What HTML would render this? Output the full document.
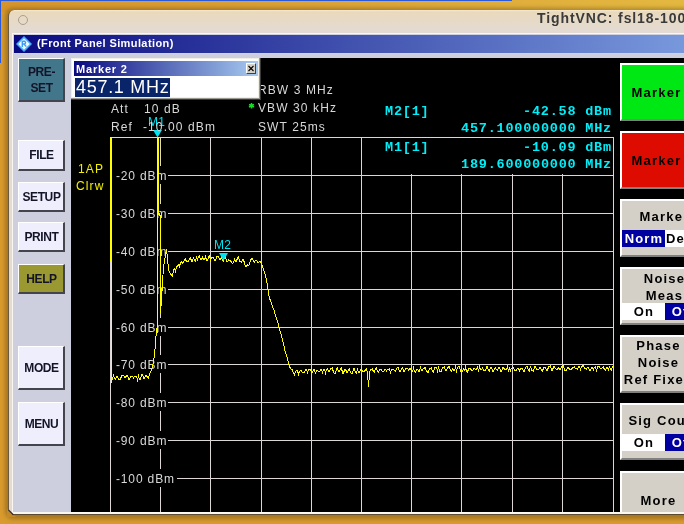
<!DOCTYPE html>
<html><head><meta charset="utf-8">
<style>
*{margin:0;padding:0;box-sizing:border-box}
html,body{width:684px;height:524px;overflow:hidden}
body{position:relative;background:#d99b2e;font-family:"Liberation Sans",sans-serif}
.a{position:absolute}
div,span{will-change:transform}
.btn{position:absolute;left:18px;width:47px;background:#eeeefc;border-top:1px solid #fff;border-left:1px solid #fff;border-right:2px solid #44444c;border-bottom:2px solid #44444c;}
.bt{position:absolute;left:-1px;right:-2px;text-align:center;font-weight:bold;font-size:12px;line-height:14px;color:#141428;letter-spacing:-0.4px;white-space:nowrap}
.sk{position:absolute;left:620px;width:80px;background:#d4d0c8;border-top:2px solid #fff;border-left:2px solid #fff;border-bottom:2px solid #808080;}
.st{position:absolute;left:-2px;width:77px;text-align:center;font-weight:bold;font-size:13px;line-height:14px;color:#000;letter-spacing:1.2px;white-space:nowrap}
.tg{position:absolute;left:0;width:78px;height:17px;display:flex}
.tw{position:relative;width:43px;height:17px;background:#fff}
.tw2{position:relative;flex:1;height:17px;background:#fff}
.tw span,.tw2 span{position:absolute;left:1px;right:0;text-align:center;font-weight:bold;font-size:13px;line-height:14px;letter-spacing:1.2px}
.scr{font-size:12px;line-height:14px;color:#d8d8d8;letter-spacing:1.1px;position:absolute;white-space:nowrap}
.cy{font-family:"Liberation Mono",monospace;font-weight:bold;font-size:13.5px;line-height:16px;letter-spacing:0.78px;color:#00eef8;position:absolute;white-space:nowrap}
</style></head><body>
<div class="a" style="left:0;top:0;width:684px;height:12px;background:linear-gradient(90deg,#d6952c 0%,#dba236 45%,#e4b840 100%)"></div>
<div class="a" style="left:0;top:0;width:512px;height:1px;background:#2a5ad8"></div>
<div class="a" style="left:0;top:0;width:1px;height:63px;background:#2a5ad8"></div>
<div class="a" style="left:5px;top:8px;width:700px;height:511px;background:rgba(70,45,0,0.35);border-radius:8px;filter:blur(2px)"></div>
<div class="a" style="left:8px;top:10px;width:700px;height:505px;background:linear-gradient(180deg,#f4e8cf 0px,#e9d9bd 2px,#e3dbd3 22px,#e3dbd3 100%);border-radius:6px 6px 0 0;border-left:1px solid #6a5a40;border-bottom:1px solid #5a4a30"></div>
<div class="a" style="left:18px;top:15px;width:10px;height:10px;border-radius:50%;border:1px solid #a89e90;background:transparent"></div>
<div class="a" style="left:537px;top:10px;font-weight:bold;font-size:14px;line-height:16px;color:#3a3a3a;white-space:nowrap;letter-spacing:0.9px">TightVNC: fsl18-100000</div>
<div class="a" style="left:12px;top:33px;width:700px;height:481px;background:#fbf6ee"></div>
<div class="a" style="left:13px;top:34px;width:700px;height:478px;background:#cdcfdf"></div>
<div class="a" style="left:14px;top:35px;width:670px;height:18px;background:linear-gradient(90deg,#0a0a80 0%,#7898dc 100%)"></div>
<div class="a" style="left:13px;top:53px;width:700px;height:1px;background:#d8d4cc"></div>
<svg class="a" style="left:0;top:500px" width="30" height="24"><polygon points="7,9 7,17 16,17" fill="#c48a2a"/><path d="M8.5 10 L13.5 15" stroke="#3a3020" stroke-width="1.2"/></svg>
<svg class="a" style="left:14px;top:35px" width="20" height="18" viewBox="0 0 20 18"><path d="M10 1 L18 9 L10 17 L2 9 Z" fill="#44acff"/><path d="M10 3.2 L15.8 9 L10 14.8 L4.2 9 Z" fill="#eef8ff"/><path d="M8.3 6 L8.3 12 M8.3 6.2 L10.8 6.2 Q12.3 7.6 10.8 9 L8.3 9 M10 9 L12.3 11.6" stroke="#3a9cf8" stroke-width="1.4" fill="none"/></svg>
<div class="a" style="left:37px;top:37px;font-weight:bold;font-size:11px;line-height:13px;color:#fff;white-space:nowrap;letter-spacing:0.4px">(Front Panel Simulation)</div>
<div class="a" style="left:71px;top:58px;width:620px;height:454px;background:#000"></div>
<svg class="a" style="left:0;top:0" width="684" height="524">
<rect x="110" y="137" width="1" height="375" fill="#dcd6d6"/>
<rect x="160" y="137" width="1" height="375" fill="#dcd6d6"/>
<rect x="210" y="137" width="1" height="375" fill="#dcd6d6"/>
<rect x="261" y="137" width="1" height="375" fill="#dcd6d6"/>
<rect x="311" y="137" width="1" height="375" fill="#dcd6d6"/>
<rect x="361" y="137" width="1" height="375" fill="#dcd6d6"/>
<rect x="411" y="137" width="1" height="375" fill="#dcd6d6"/>
<rect x="461" y="137" width="1" height="375" fill="#dcd6d6"/>
<rect x="512" y="137" width="1" height="375" fill="#dcd6d6"/>
<rect x="562" y="137" width="1" height="375" fill="#dcd6d6"/>
<rect x="613" y="137" width="1" height="375" fill="#dcd6d6"/>
<rect x="110" y="137" width="504" height="1" fill="#dcd6d6"/>
<rect x="110" y="175" width="504" height="1" fill="#dcd6d6"/>
<rect x="110" y="213" width="504" height="1" fill="#dcd6d6"/>
<rect x="110" y="251" width="504" height="1" fill="#dcd6d6"/>
<rect x="110" y="289" width="504" height="1" fill="#dcd6d6"/>
<rect x="110" y="327" width="504" height="1" fill="#dcd6d6"/>
<rect x="110" y="364" width="504" height="1" fill="#dcd6d6"/>
<rect x="110" y="402" width="504" height="1" fill="#dcd6d6"/>
<rect x="110" y="440" width="504" height="1" fill="#dcd6d6"/>
<rect x="110" y="478" width="504" height="1" fill="#dcd6d6"/>
</svg>
<div class="a" style="left:111px;top:166px;width:57px;height:18px;background:#000"></div>
<div class="scr" style="left:116px;top:169px;letter-spacing:0.85px">-20 dBm</div>
<div class="a" style="left:111px;top:204px;width:57px;height:18px;background:#000"></div>
<div class="scr" style="left:116px;top:207px;letter-spacing:0.85px">-30 dBm</div>
<div class="a" style="left:111px;top:242px;width:57px;height:18px;background:#000"></div>
<div class="scr" style="left:116px;top:245px;letter-spacing:0.85px">-40 dBm</div>
<div class="a" style="left:111px;top:280px;width:57px;height:18px;background:#000"></div>
<div class="scr" style="left:116px;top:283px;letter-spacing:0.85px">-50 dBm</div>
<div class="a" style="left:111px;top:318px;width:57px;height:18px;background:#000"></div>
<div class="scr" style="left:116px;top:321px;letter-spacing:0.85px">-60 dBm</div>
<div class="a" style="left:111px;top:355px;width:57px;height:18px;background:#000"></div>
<div class="scr" style="left:116px;top:358px;letter-spacing:0.85px">-70 dBm</div>
<div class="a" style="left:111px;top:393px;width:57px;height:18px;background:#000"></div>
<div class="scr" style="left:116px;top:396px;letter-spacing:0.85px">-80 dBm</div>
<div class="a" style="left:111px;top:431px;width:57px;height:18px;background:#000"></div>
<div class="scr" style="left:116px;top:434px;letter-spacing:0.85px">-90 dBm</div>
<div class="a" style="left:111px;top:469px;width:66px;height:18px;background:#000"></div>
<div class="scr" style="left:116px;top:472px;letter-spacing:0.85px">-100 dBm</div>
<div class="a" style="left:362px;top:138px;width:251px;height:36px;background:#000"></div>
<svg class="a" style="left:0;top:0" width="684" height="524">
<polyline points="110.5,137 111.5,378.9 112.5,379.4 113.5,374.4 114.5,378.7 115.5,379.1 116.5,376.4 117.5,376.2 118.5,379.0 119.5,379.3 120.5,379.7 121.5,375.6 122.5,375.4 123.5,375.1 124.5,377.4 125.5,377.5 126.5,375.8 127.5,375.5 128.5,379.2 129.5,379.8 130.5,376.3 131.5,376.2 132.5,376.1 133.5,377.8 134.5,376.4 135.5,376.3 136.5,376.2 137.5,379.9 138.5,376.0 139.5,379.3 140.5,379.9 141.5,374.9 142.5,374.3 143.5,378.0 144.5,378.3 145.5,375.5 146.5,375.2 147.5,377.8 148.5,378.0 149.5,374.0 150.5,371.5 151.5,370.3 152.5,366.3 153.5,362.4 154.5,353.1 155.5,344.5 156.5,328.3" fill="none" stroke="#ffff00" stroke-width="1" shape-rendering="crispEdges"/>
<polyline points="160.5,313.0 161.5,299.8 162.5,282.8 163.5,266.6 164.5,261.4 165.5,254.8 166.5,249.4 167.5,258.3 168.5,269.2 169.5,272.7 170.5,273.9 171.5,274.7 172.5,276.4 173.5,270.5 174.5,268.6 175.5,271.3 176.5,267.2 177.5,265.6 178.5,264.4 179.5,266.4 180.5,262.7 181.5,261.6 182.5,263.3 183.5,262.7 184.5,259.7 185.5,258.9 186.5,262.0 187.5,261.9 188.5,261.7 189.5,258.2 190.5,257.4 191.5,261.4 192.5,261.5 193.5,257.2 194.5,260.8 195.5,261.3 196.5,257.4 197.5,259.7 198.5,256.7 199.5,256.1 200.5,259.4 201.5,259.6 202.5,257.3 203.5,259.3 204.5,259.5 205.5,256.4 206.5,260.4 207.5,260.9 208.5,256.5 209.5,256.0 210.5,260.7 211.5,257.7 212.5,257.7 213.5,257.7 214.5,260.1 215.5,260.6 216.5,257.0 217.5,256.8 218.5,256.6 219.5,259.1 220.5,259.2 221.5,256.5 222.5,260.7 223.5,261.2 224.5,256.8 225.5,256.3 226.5,260.9 227.5,261.7 228.5,259.8 229.5,260.1 230.5,260.5 231.5,262.5 232.5,263.1 233.5,262.9 234.5,258.9 235.5,261.5 236.5,261.3 237.5,258.0 238.5,257.1 239.5,261.3 240.5,261.3 241.5,262.4 242.5,259.3 243.5,259.7 244.5,263.2 245.5,266.0 246.5,266.4 247.5,264.8 248.5,265.5 249.5,264.4 250.5,259.2 251.5,259.0 252.5,258.8 253.5,261.9 254.5,262.2 255.5,260.3 256.5,260.1 257.5,262.3 258.5,262.6 259.5,261.1 260.5,261.3 261.5,264.7 262.5,266.3 263.5,268.9 264.5,272.9 265.5,275.8 266.5,280.2 267.5,285.8 268.5,292.9 269.5,298.9 270.5,300.3 271.5,303.0 272.5,306.9 273.5,308.9 274.5,311.6 275.5,315.6 276.5,318.9 277.5,321.3 278.5,324.4 279.5,328.6 280.5,332.7 281.5,335.7 282.5,339.6 283.5,343.6 284.5,348.6 285.5,352.8 286.5,355.4 287.5,359.2 288.5,363.1 289.5,366.4 290.5,368.5 291.5,369.8 292.5,369.7 293.5,373.6 294.5,374.8 295.5,371.1 296.5,370.9 297.5,370.7 298.5,374.1 299.5,371.1 300.5,371.0 301.5,370.8 302.5,372.6 303.5,372.7 304.5,372.9 305.5,369.7 306.5,369.2 307.5,372.5 308.5,370.0 309.5,369.6 310.5,369.3 311.5,372.2 312.5,372.4 313.5,369.6 314.5,369.2 315.5,374.2 316.5,370.4 317.5,370.2 318.5,371.7 319.5,371.8 320.5,369.6 321.5,369.3 322.5,372.5 323.5,369.8 324.5,369.5 325.5,372.9 326.5,369.1 327.5,368.6 328.5,371.3 329.5,371.4 330.5,368.8 331.5,368.4 332.5,368.0 333.5,372.8 334.5,373.1 335.5,373.5 336.5,368.5 337.5,367.9 338.5,371.4 339.5,371.5 340.5,368.4 341.5,367.9 342.5,373.0 343.5,373.6 344.5,369.5 345.5,369.1 346.5,372.0 347.5,372.3 348.5,369.1 349.5,368.6 350.5,372.7 351.5,373.1 352.5,373.5 353.5,369.0 354.5,368.6 355.5,372.6 356.5,373.1 357.5,369.1 358.5,372.1 359.5,372.4 360.5,369.4 361.5,369.2 362.5,371.6 363.5,371.8 364.5,372.0 365.5,369.1 366.5,368.7 367.5,372.6 368.5,387 369.5,373.3 370.5,369.3 371.5,369.1 372.5,368.9 373.5,371.9 374.5,372.3 375.5,368.4 376.5,367.9 377.5,371.7 378.5,372.0 379.5,369.9 380.5,369.8 381.5,369.7 382.5,371.6 383.5,371.9 384.5,369.5 385.5,369.3 386.5,371.0 387.5,369.3 388.5,369.2 389.5,369.0 390.5,372.6 391.5,369.7 392.5,369.6 393.5,369.6 394.5,371.0 395.5,371.2 396.5,368.2 397.5,367.9 398.5,367.6 399.5,371.4 400.5,371.7 401.5,368.1 402.5,367.7 403.5,371.0 404.5,371.2 405.5,368.6 406.5,368.4 407.5,368.1 408.5,370.5 409.5,368.9 410.5,368.6 411.5,371.5 412.5,371.9 413.5,368.2 414.5,371.6 415.5,372.1 416.5,369.4 417.5,369.2 418.5,371.3 419.5,371.7 420.5,367.1 421.5,370.2 422.5,370.3 423.5,368.3 424.5,368.0 425.5,367.8 426.5,371.7 427.5,372.0 428.5,372.4 429.5,368.5 430.5,368.2 431.5,368.0 432.5,371.9 433.5,372.4 434.5,367.8 435.5,367.4 436.5,367.1 437.5,370.9 438.5,367.4 439.5,371.0 440.5,371.3 441.5,371.5 442.5,367.5 443.5,367.2 444.5,366.8 445.5,370.3 446.5,370.5 447.5,367.4 448.5,367.0 449.5,366.6 450.5,370.8 451.5,371.1 452.5,368.8 453.5,370.4 454.5,370.6 455.5,367.0 456.5,370.8 457.5,367.3 458.5,366.9 459.5,366.5 460.5,371.1 461.5,371.3 462.5,371.6 463.5,368.6 464.5,370.4 465.5,367.1 466.5,371.7 467.5,372.3 468.5,368.7 469.5,368.6 470.5,368.4 471.5,370.5 472.5,370.8 473.5,368.7 474.5,368.6 475.5,369.7 476.5,369.8 477.5,367.1 478.5,370.4 479.5,366.9 480.5,369.6 481.5,369.7 482.5,367.9 483.5,370.4 484.5,370.7 485.5,370.9 486.5,366.9 487.5,366.3 488.5,370.9 489.5,371.4 490.5,367.6 491.5,367.2 492.5,371.3 493.5,371.8 494.5,368.1 495.5,367.9 496.5,369.9 497.5,370.2 498.5,367.6 499.5,367.2 500.5,371.0 501.5,371.5 502.5,367.7 503.5,367.3 504.5,369.7 505.5,369.8 506.5,369.9 507.5,366.8 508.5,370.9 509.5,368.2 510.5,370.7 511.5,368.1 512.5,367.9 513.5,367.8 514.5,370.1 515.5,370.3 516.5,370.6 517.5,368.2 518.5,368.1 519.5,370.7 520.5,368.4 521.5,368.3 522.5,368.2 523.5,371.1 524.5,371.6 525.5,367.2 526.5,366.9 527.5,366.6 528.5,370.7 529.5,371.1 530.5,365.8 531.5,370.6 532.5,370.9 533.5,371.3 534.5,366.9 535.5,366.4 536.5,369.7 537.5,369.9 538.5,370.0 539.5,367.7 540.5,367.4 541.5,370.6 542.5,371.1 543.5,368.0 544.5,367.9 545.5,367.8 546.5,370.3 547.5,370.7 548.5,366.4 549.5,366.1 550.5,365.7 551.5,370.0 552.5,370.3 553.5,366.7 554.5,366.2 555.5,369.0 556.5,369.1 557.5,369.2 558.5,367.9 559.5,369.3 560.5,369.5 561.5,366.5 562.5,366.1 563.5,365.7 564.5,370.0 565.5,370.3 566.5,370.6 567.5,368.0 568.5,367.9 569.5,369.3 570.5,369.5 571.5,369.6 572.5,367.4 573.5,367.2 574.5,367.0 575.5,368.9 576.5,369.0 577.5,369.1 578.5,366.6 579.5,366.2 580.5,369.7 581.5,366.3 582.5,366.0 583.5,365.6 584.5,368.9 585.5,369.0 586.5,369.1 587.5,367.6 588.5,367.4 589.5,370.1 590.5,370.6 591.5,367.7 592.5,367.6 593.5,369.5 594.5,367.1 595.5,366.9 596.5,370.4 597.5,366.9 598.5,366.7 599.5,366.4 600.5,368.8 601.5,368.9 602.5,367.1 603.5,366.9 604.5,369.9 605.5,370.4 606.5,367.6 607.5,367.5 608.5,370.0 609.5,366.0 610.5,369.8 611.5,370.2 612.5,366.7 613.5,366.3" fill="none" stroke="#ffff00" stroke-width="1" shape-rendering="crispEdges"/>
<rect x="157" y="137" width="2" height="78" fill="#ffff00"/><rect x="157" y="215" width="1" height="118" fill="#ffff00"/><rect x="159" y="213" width="1" height="3" fill="#ffff00"/><rect x="160" y="215" width="1" height="98" fill="#ffff00"/>
<rect x="110" y="137" width="1" height="101" fill="#ffff00"/><rect x="111" y="137" width="1" height="246" fill="#ffff00"/>
<path d="M153 130 L162 130 L157.5 137.5 Z" fill="#00e4f0"/>
<path d="M219 253 L228 253 L223.5 260.5 Z" fill="#00e4f0"/>
</svg>
<div class="scr" style="left:148px;top:115px;color:#00e4f0;letter-spacing:0.3px">M1</div>
<div class="scr" style="left:214px;top:238px;color:#00e4f0;letter-spacing:0.3px">M2</div>
<div class="btn" style="top:58px;height:44px;background:#42768a;"><div class="bt" style="top:6px">PRE-</div><div class="bt" style="top:22px">SET</div></div>
<div class="btn" style="top:140px;height:31px;"><div class="bt" style="top:7px">FILE</div></div>
<div class="btn" style="top:182px;height:30px;"><div class="bt" style="top:7px">SETUP</div></div>
<div class="btn" style="top:222px;height:30px;"><div class="bt" style="top:7px">PRINT</div></div>
<div class="btn" style="top:264px;height:30px;background:#9a9830;"><div class="bt" style="top:7px">HELP</div></div>
<div class="btn" style="top:346px;height:44px;"><div class="bt" style="top:14px">MODE</div></div>
<div class="btn" style="top:402px;height:44px;"><div class="bt" style="top:14px">MENU</div></div>
<div class="sk" style="top:63px;height:58px;background:#00e814;"><div class="st" style="top:21px;margin-left:-2px">Marker</div></div>
<div class="sk" style="top:131px;height:58px;background:#de0c00;"><div class="st" style="top:21px;margin-left:-2px">Marker</div></div>
<div class="sk" style="top:199px;height:58px;"><div class="st" style="top:9px;margin-left:6px">Marker</div><div class="tg" style="top:29px"><div class="tw" style="background:#0000a0;color:#fff"><span style="top:2px">Norm</span></div><div class="tw2" style=""><span style="top:2px">Delta</span></div></div></div>
<div class="sk" style="top:267px;height:58px;"><div class="st" style="top:3px;margin-left:6px">Noise</div><div class="st" style="top:20px;margin-left:6px">Meas</div><div class="tg" style="top:34px"><div class="tw" style=""><span style="top:2px">On</span></div><div class="tw2" style="background:#0000a0;color:#fff"><span style="top:2px">Off</span></div></div></div>
<div class="sk" style="top:335px;height:58px;"><div class="st" style="top:2px;margin-left:0px">Phase</div><div class="st" style="top:19px;margin-left:0px">Noise</div><div class="st" style="top:36px;margin-left:0px">Ref Fixed</div></div>
<div class="sk" style="top:403px;height:57px;"><div class="st" style="top:9px;margin-left:6px">Sig Count</div><div class="tg" style="top:29px"><div class="tw" style=""><span style="top:2px">On</span></div><div class="tw2" style="background:#0000a0;color:#fff"><span style="top:2px">Off</span></div></div></div>
<div class="sk" style="top:471px;height:41px;border-bottom:none;"><div class="st" style="top:21px;margin-left:0px">More</div></div>
<div class="scr" style="left:111px;top:102px">Att</div>
<div class="scr" style="left:144px;top:102px">10 dB</div>
<div class="scr" style="left:111px;top:120px">Ref</div>
<div class="scr" style="left:143px;top:120px">-10.00 dBm</div>
<div class="scr" style="left:258px;top:83px">RBW 3 MHz</div>
<div class="scr" style="left:258px;top:101px">VBW 30 kHz</div>
<div class="scr" style="left:258px;top:120px">SWT 25ms</div>
<svg class="a" style="left:247px;top:102px" width="9" height="8"><path d="M4.5 1 L4.5 6.5 M2 2.5 L7 5 M7 2.5 L2 5" stroke="#10e020" stroke-width="1.5"/></svg>
<div class="scr" style="left:78px;top:162px;color:#f0f000">1AP</div>
<div class="scr" style="left:76px;top:179px;color:#f0f000">Clrw</div>
<div class="cy" style="left:385px;top:104px">M2[1]</div>
<div class="cy" style="left:523px;top:104px">-42.58 dBm</div>
<div class="cy" style="left:461px;top:121px">457.100000000 MHz</div>
<div class="cy" style="left:385px;top:140px">M1[1]</div>
<div class="cy" style="left:523px;top:140px">-10.09 dBm</div>
<div class="cy" style="left:461px;top:157px">189.600000000 MHz</div>
<div class="a" style="left:71px;top:58px;width:190px;height:42px;background:#3a3a3a"></div>
<div class="a" style="left:71px;top:58px;width:189px;height:41px;background:#9a9890"></div>
<div class="a" style="left:71px;top:58px;width:188px;height:40px;background:#f2efe6"></div>
<div class="a" style="left:72px;top:59px;width:186px;height:38px;background:#fff"></div>
<div class="a" style="left:74px;top:61px;width:184px;height:15px;background:linear-gradient(90deg,#0a0a80,#a6caf0)"></div>
<div class="a" style="left:76px;top:63px;font-weight:bold;font-size:11px;line-height:13px;color:#fff;letter-spacing:0.8px;white-space:nowrap">Marker 2</div>
<div class="a" style="left:246px;top:63px;width:10px;height:11px;background:#d4d0c8;border-top:1px solid #fff;border-left:1px solid #fff;border-right:1px solid #404040;border-bottom:1px solid #404040"></div>
<svg class="a" style="left:246px;top:63px" width="10" height="11"><path d="M2.5 3 L7.5 8 M7.5 3 L2.5 8" stroke="#000" stroke-width="1.1"/></svg>
<div class="a" style="left:74px;top:77px;width:184px;height:20px;background:#fff"></div>
<div class="a" style="left:75px;top:78px;width:95px;height:19px;background:#0a246a"></div>
<div class="a" style="left:76px;top:77px;font-size:18px;line-height:20px;color:#fff;letter-spacing:0.7px;white-space:nowrap">457.1 MHz</div>
</body></html>
